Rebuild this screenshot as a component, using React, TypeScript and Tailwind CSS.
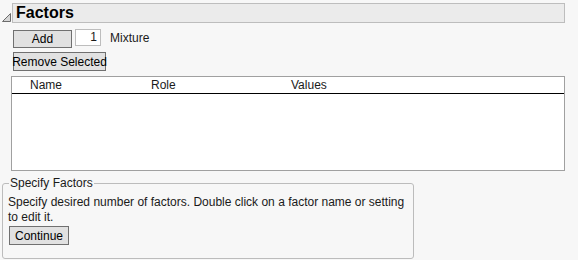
import React from "react";

const font = { fontFamily: '"Liberation Sans", sans-serif' };

function Btn({ label, className }: { label: string; className: string }) {
  return (
    <button
      className={`flex items-center justify-center whitespace-nowrap border border-[#707070] bg-[#e1e1e1] text-[12px] leading-none text-black ${className}`}
    >
      {label}
    </button>
  );
}

export default function App() {
  return (
    <div className="w-[578px] h-[260px] bg-[#f7f7f7] text-[#1a1a1a] overflow-hidden" style={font}>
      {/* outline header */}
      <div className="flex items-start pt-[3px]">
        <svg width="12" height="20" viewBox="0 0 12 20" className="shrink-0">
          <path d="M2.5 18.5 L10.5 18.5 L10.5 10.5 Z" fill="#d6d6d6" stroke="#6b6b6b" strokeWidth="1" />
        </svg>
        <div className="w-[553px] h-[20px] border border-[#bdbdbd] bg-[#ebebeb] flex items-center pl-[3px]">
          <span className="text-[16px] font-bold text-black leading-none">Factors</span>
        </div>
      </div>

      <div className="pl-[13px]">
        <div className="flex items-center mt-[5px] h-[19px]">
          <Btn label="Add" className="w-[59px] h-[18px] mt-[2px]" />
          <div className="ml-[3px] w-[26px] h-[17px] border border-[#bdbdbd] bg-white text-[12px] text-right pr-[3px] leading-[15px]">
            1
          </div>
          <span className="ml-[9px] text-[12px]">Mixture</span>
        </div>
        <Btn label="Remove Selected" className="mt-[5px] w-[93px] h-[19px]" />
      </div>

      {/* factor table */}
      <div className="ml-[11px] mt-[5px] w-[554px] h-[95px] border border-[#a0a0a0] bg-white">
        <div className="flex h-[17px] border-b border-black text-[12px] leading-[16px]">
          <span className="pl-[18px] w-[139px]">Name</span>
          <span className="w-[140px]">Role</span>
          <span>Values</span>
        </div>
      </div>

      {/* specify factors group */}
      <fieldset className="ml-[2px] mt-[5px] w-[412px] h-[83px] border border-[#bcbcbc] rounded-[3px] px-[5px]">
        <legend className="ml-[1px] px-[1px] text-[12px] leading-[14px]">Specify Factors</legend>
        <p className="mt-[5px] text-[12px] leading-[15px]">
          Specify desired number of factors. Double click on a factor name or setting to edit it.
        </p>
        <Btn label="Continue" className="mt-[1px] ml-[1px] w-[60px] h-[19px]" />
      </fieldset>
    </div>
  );
}
